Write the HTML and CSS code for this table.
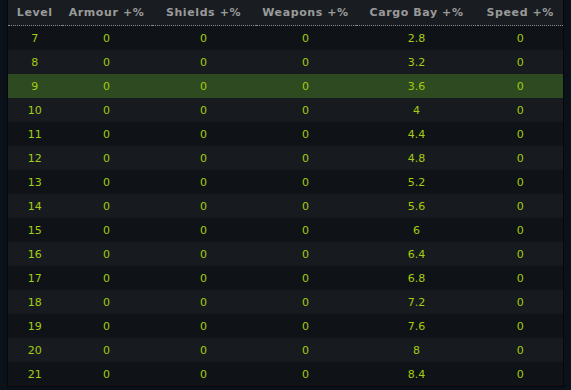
FILE: index.html
```html
<!DOCTYPE html>
<html>
<head>
<meta charset="utf-8">
<link rel="stylesheet" href="styles.css">
</head>
<body>
<div class="panel">
<table class="grid">
<colgroup>
<col class="c1"><col class="c2"><col class="c3"><col class="c4"><col class="c5"><col class="c6">
</colgroup>
<thead>
<tr><th>Level</th><th>Armour +%</th><th>Shields +%</th><th>Weapons +%</th><th>Cargo Bay +%</th><th>Speed +%</th></tr>
</thead>
<tbody>
<tr><td>7</td><td>0</td><td>0</td><td>0</td><td>2.8</td><td>0</td></tr>
<tr><td>8</td><td>0</td><td>0</td><td>0</td><td>3.2</td><td>0</td></tr>
<tr class="sel"><td>9</td><td>0</td><td>0</td><td>0</td><td>3.6</td><td>0</td></tr>
<tr><td>10</td><td>0</td><td>0</td><td>0</td><td>4</td><td>0</td></tr>
<tr><td>11</td><td>0</td><td>0</td><td>0</td><td>4.4</td><td>0</td></tr>
<tr><td>12</td><td>0</td><td>0</td><td>0</td><td>4.8</td><td>0</td></tr>
<tr><td>13</td><td>0</td><td>0</td><td>0</td><td>5.2</td><td>0</td></tr>
<tr><td>14</td><td>0</td><td>0</td><td>0</td><td>5.6</td><td>0</td></tr>
<tr><td>15</td><td>0</td><td>0</td><td>0</td><td>6</td><td>0</td></tr>
<tr><td>16</td><td>0</td><td>0</td><td>0</td><td>6.4</td><td>0</td></tr>
<tr><td>17</td><td>0</td><td>0</td><td>0</td><td>6.8</td><td>0</td></tr>
<tr><td>18</td><td>0</td><td>0</td><td>0</td><td>7.2</td><td>0</td></tr>
<tr><td>19</td><td>0</td><td>0</td><td>0</td><td>7.6</td><td>0</td></tr>
<tr><td>20</td><td>0</td><td>0</td><td>0</td><td>8</td><td>0</td></tr>
<tr><td>21</td><td>0</td><td>0</td><td>0</td><td>8.4</td><td>0</td></tr>
</tbody>
</table>
</div>
</body>
</html>
```
FILE: styles.css
```css
html, body {
  margin: 0;
  padding: 0;
  background: #0b1118;
  width: 571px;
  height: 390px;
  overflow: hidden;
}
.panel {
  padding: 0 7px 0 7px;
}
.grid {
  width: 557px;
  border-collapse: collapse;
  table-layout: fixed;
  border: 1px solid #05070a;
  border-top: none;
  font-family: "DejaVu Sans", sans-serif;
  font-size: 11px;
}
.c1 { width: 54px; }
.c2 { width: 90px; }
.c3 { width: 104px; }
.c4 { width: 100px; }
.c5 { width: 122px; }
.c6 { width: auto; }
.grid th {
  height: 25px;
  padding: 0;
  background: #191d21;
  color: #9a9a9a;
  font-weight: bold;
  letter-spacing: 0.6px;
  text-align: center;
  border-bottom: 1px dotted #8a8a8a;
}
.grid td {
  height: 24px;
  padding: 0;
  text-align: center;
  color: #a4cc10;
  background: #0f1317;
}
.grid tbody tr:nth-child(even) td {
  background: #171b1f;
}
.grid tbody tr.sel td {
  background: #2d4a20;
}
```
